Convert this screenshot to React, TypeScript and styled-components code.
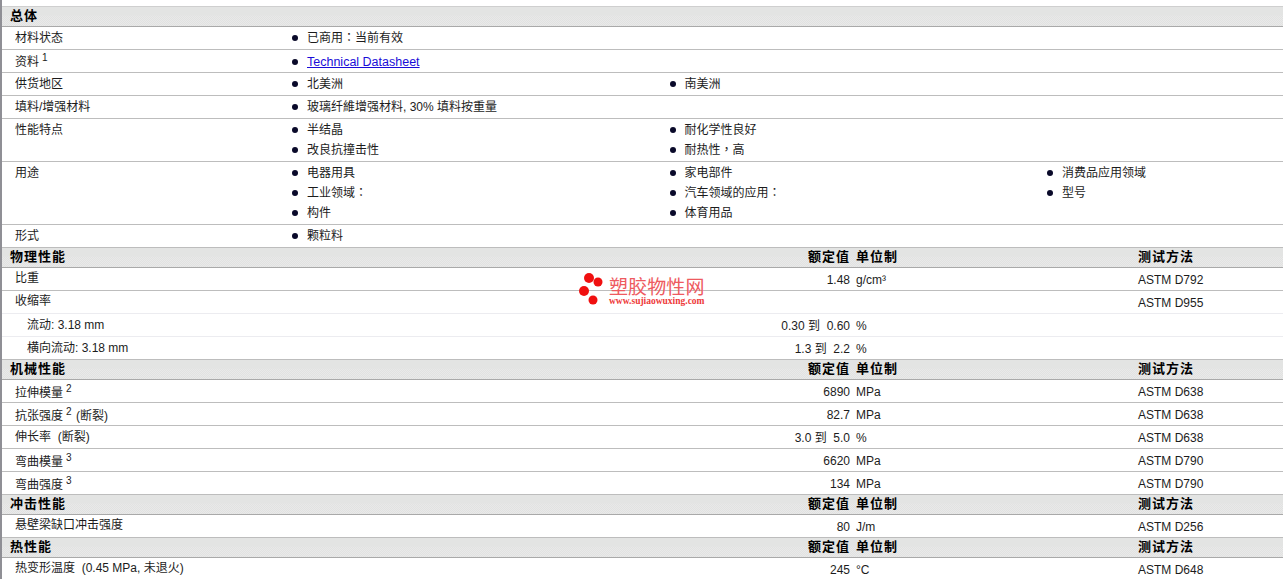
import React from "react";
import styled, { createGlobalStyle } from "styled-components";

const Global = createGlobalStyle`
  html, body { margin: 0; padding: 0; background: #fff; overflow: hidden; }
  body { font-family: "Liberation Sans", "Noto Sans CJK SC", sans-serif; font-size: 12px; color: #1c1c1c; }
`;

const Page = styled.div`
  position: relative;
  box-sizing: border-box;
  width: 1283px;
  height: 579px;
  overflow: hidden;
  padding-top: 6px;
  border-left: 2px solid #8f8f95;
`;

const SectionHead = styled.div<{ $first?: boolean }>`
  display: grid;
  grid-template-columns: 848px 288px 1fr;
  height: 19px;
  line-height: 18px;
  background:
    linear-gradient(#e3e4e3, #e3e4e3) top / 100% 45% no-repeat,
    repeating-conic-gradient(#e1e2e1 0 25%, #e9e9e9 0 50%) 0 0 / 2px 2px;
  border-top: ${(p) => (p.$first ? "1px solid #cfcfcf" : "0")};
  border-bottom: 1px solid #a9a9a9;
  font-size: 13px;
  font-weight: 700;
  letter-spacing: 1px;
  color: #000;
`;

const SectionTitle = styled.div`
  display: flex;
  justify-content: space-between;
  padding-left: 8px;
`;

const HeadUnit = styled.div`
  padding-left: 6px;
`;

const InfoRow = styled.div`
  display: grid;
  grid-template-columns: 289px 1fr;
  border-bottom: 1px solid #bdbdbd;
  padding: 1px 0;
  line-height: 20px;
`;

const Label = styled.div<{ $indent?: boolean; $top?: number }>`
  padding-left: ${(p) => (p.$indent ? 25 : 13)}px;
  margin-top: ${(p) => p.$top ?? 0}px;
  margin-bottom: ${(p) => -(p.$top ?? 0)}px;
  white-space: pre;
`;

const Sup = styled.sup`
  font-size: 10px;
  line-height: 0;
  vertical-align: 5px;
  margin-left: 3px;
  margin-right: 1px;
`;

const Bullets = styled.ul<{ $low?: boolean }>`
  display: grid;
  grid-template-columns: repeat(3, 377.5px);
  list-style: none;
  padding: 0;
  margin: ${(p) => (p.$low ? "1px 0 -1px" : "0")};
`;

const Bullet = styled.li`
  position: relative;
  padding-left: 16px;
  height: 20px;
  &::before {
    content: "";
    position: absolute;
    left: 1px;
    top: 7px;
    width: 6px;
    height: 6px;
    border-radius: 50%;
    background: #0a0a2a;
  }
`;

const Punct = styled.span`
  font-family: "Noto Sans CJK TC", sans-serif;
  line-height: 1;
`;

const DocLink = styled.a`
  font-size: 12.5px;
  color: #1a0dd8;
  text-decoration: underline;
`;

const DataRow = styled.div<{ $light?: boolean }>`
  display: grid;
  grid-template-columns: 500px 348px 288px 1fr;
  height: 22px;
  line-height: 20px;
  border-bottom: 1px solid ${(p) => (p.$light ? "#ececf0" : "#bdbdbd")};
`;

const Value = styled.div`
  align-self: end;
  text-align: right;
  white-space: pre;
`;

const Unit = styled.div`
  align-self: end;
  padding-left: 6px;
`;

const Method = styled.div`
  align-self: end;
`;

const Watermark = styled.div`
  position: absolute;
  left: 576px;
  top: 270px;
  display: flex;
  align-items: flex-start;
  gap: 3px;
  pointer-events: none;
`;

const MarkText = styled.div`
  display: flex;
  flex-direction: column;
  margin-top: 9px;
`;

const MarkName = styled.div`
  font-size: 19px;
  line-height: 18px;
  letter-spacing: 0.1px;
  color: #ee5a60;
  white-space: nowrap;
`;

const MarkUrl = styled.div`
  font-family: "Liberation Serif", serif;
  font-size: 9.5px;
  line-height: 8px;
  font-weight: 700;
  color: #ee3a3a;
  white-space: nowrap;
`;

const info: { label: React.ReactNode; items: React.ReactNode[]; low?: boolean; top?: number }[] = [
  { label: "材料状态", items: [<>已商用<Punct>：</Punct>当前有效</>] },
  {
    label: (<>资料<Sup>1</Sup></>),
    items: [<DocLink href="#">Technical Datasheet</DocLink>],
    low: true,
    top: 1,
  },
  { label: "供货地区", items: ["北美洲", "南美洲"] },
  { label: "填料/增强材料", items: ["玻璃纤維增强材料, 30% 填料按重量"] },
  { label: "性能特点", items: ["半结晶", "耐化学性良好", "", "改良抗撞击性", <>耐热性<Punct>，</Punct>高</>] },
  {
    label: "用途",
    items: ["电器用具", "家电部件", "消费品应用领域", <>工业领域<Punct>：</Punct></>, <>汽车领域的应用<Punct>：</Punct></>, "型号", "构件", "体育用品"],
  },
  { label: "形式", items: ["颗粒料"] },
];

type D = { label: React.ReactNode; value?: string; unit?: string; method?: string; indent?: boolean; light?: boolean; top?: number };

const sections: { title: string; rows: D[] }[] = [
  {
    title: "物理性能",
    rows: [
      { label: "比重", value: "1.48", unit: "g/cm³", method: "ASTM D792" },
      { label: "收缩率", method: "ASTM D955", light: true },
      { label: "流动: 3.18 mm", value: "0.30 到  0.60", unit: "%", indent: true, light: true, top: 1 },
      { label: "横向流动: 3.18 mm", value: "1.3 到  2.2", unit: "%", indent: true, top: 1 },
    ],
  },
  {
    title: "机械性能",
    rows: [
      { label: (<>拉伸模量<Sup>2</Sup></>), value: "6890", unit: "MPa", method: "ASTM D638", top: 3 },
      { label: (<>抗张强度<Sup>2</Sup> (断裂)</>), value: "82.7", unit: "MPa", method: "ASTM D638", top: 3 },
      { label: "伸长率  (断裂)", value: "3.0 到  5.0", unit: "%", method: "ASTM D638", top: 1 },
      { label: (<>弯曲模量<Sup>3</Sup></>), value: "6620", unit: "MPa", method: "ASTM D790", top: 3 },
      { label: (<>弯曲强度<Sup>3</Sup></>), value: "134", unit: "MPa", method: "ASTM D790", top: 3 },
    ],
  },
  {
    title: "冲击性能",
    rows: [{ label: "悬壁梁缺口冲击强度", value: "80", unit: "J/m", method: "ASTM D256" }],
  },
  {
    title: "热性能",
    rows: [{ label: "热变形温度  (0.45 MPa, 未退火)", value: "245", unit: "°C", method: "ASTM D648" }],
  },
];

function Head({ title, labels, first }: { title: string; labels?: boolean; first?: boolean }) {
  return (
    <SectionHead $first={first}>
      <SectionTitle>
        <span>{title}</span>
        {labels && <span>额定值</span>}
      </SectionTitle>
      {labels && <HeadUnit>单位制</HeadUnit>}
      {labels && <div>测试方法</div>}
    </SectionHead>
  );
}

export default function App() {
  return (
    <Page>
      <Global />
      <Head title="总体" first />
      {info.map((r, i) => (
        <InfoRow key={i}>
          <Label $top={r.top}>{r.label}</Label>
          <Bullets $low={r.low}>
            {r.items.map((it, j) =>
              it === "" ? <li key={j} /> : <Bullet key={j}>{it}</Bullet>
            )}
          </Bullets>
        </InfoRow>
      ))}
      {sections.map((s) => (
        <React.Fragment key={s.title}>
          <Head title={s.title} labels />
          {s.rows.map((r, i) => (
            <DataRow key={i} $light={r.light}>
              <Label $indent={r.indent} $top={r.top}>{r.label}</Label>
              <Value>{r.value}</Value>
              <Unit>{r.unit}</Unit>
              <Method>{r.method}</Method>
            </DataRow>
          ))}
        </React.Fragment>
      ))}
      <Watermark>
        <svg width="28" height="38" viewBox="0 0 28 38">
          <circle cx="11" cy="8" r="5" fill="#f01010" />
          <circle cx="20" cy="12" r="4.5" fill="#f01010" />
          <circle cx="6" cy="21" r="5" fill="#f01010" />
          <circle cx="15" cy="30" r="4.5" fill="#f01010" />
        </svg>
        <MarkText>
          <MarkName>塑胶物性网</MarkName>
          <MarkUrl>www.sujiaowuxing.com</MarkUrl>
        </MarkText>
      </Watermark>
    </Page>
  );
}
